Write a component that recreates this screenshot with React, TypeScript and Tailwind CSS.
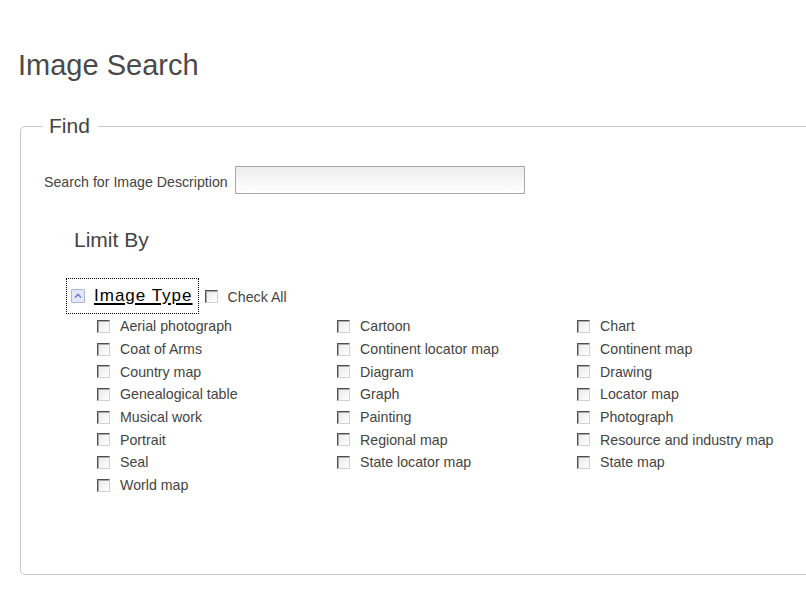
import React from "react";

const imageTypes = [
	"Aerial photograph",
	"Cartoon",
	"Chart",
	"Coat of Arms",
	"Continent locator map",
	"Continent map",
	"Country map",
	"Diagram",
	"Drawing",
	"Genealogical table",
	"Graph",
	"Locator map",
	"Musical work",
	"Painting",
	"Photograph",
	"Portrait",
	"Regional map",
	"Resource and industry map",
	"Seal",
	"State locator map",
	"State map",
	"World map",
];

function Check() {
	return (
		<input
			type="checkbox"
			className="appearance-none shrink-0 w-[13px] h-[13px] m-0 border border-t-[#4f4f4f] border-l-[#4f4f4f] border-r-[#d2d2d2] border-b-[#d2d2d2] bg-linear-to-br from-[#e8e8e8] to-white shadow-[inset_1px_1px_0_#a8a8a8]"
		/>
	);
}

function CollapseIcon() {
	return (
		<span className="shrink-0 flex items-center justify-center w-[14px] h-[14px] border border-[#aab5e2] bg-[#e3e8f8] rounded-[1px]">
			<svg width="10" height="10" viewBox="0 0 10 10">
				<path d="M2 6.5 L5 3.5 L8 6.5" fill="none" stroke="#7083c9" strokeWidth="1.6" />
			</svg>
		</span>
	);
}

export default function App() {
	return (
		<div className="w-[806px] h-[614px] overflow-hidden bg-white text-[#444] font-['Liberation_Sans',Arial,sans-serif]">
			<h1 className="mt-[49px] pl-[18px] text-[29px] leading-[33px] font-normal text-[#4a4a4a]">
				Image Search
			</h1>

			<fieldset className="ml-[20px] mt-[32px] w-[830px] border border-[#c9c9c9] rounded-[5px] pl-[23px] pt-[28px] pb-[77px]">
				<legend className="-ml-[1px] pl-[6px] pr-[8px] text-[21px] leading-[24px] text-[#444]">
					Find
				</legend>

				<div className="flex items-center h-[28px]">
					<label className="pt-[3px] text-[14.2px] leading-[20px]">
						Search for Image Description
					</label>
					<input
						type="text"
						className="ml-[7px] w-[290px] h-[28px] border border-[#a9a9a9] bg-linear-to-b from-[#ececec] to-white outline-none"
					/>
				</div>

				<h2 className="mt-[34px] ml-[30px] text-[21px] leading-[24px] font-normal text-[#444]">
					Limit By
				</h2>

				<div className="mt-[26px] ml-[22px] flex items-center">
					<a
						href="#"
						className="flex items-center border border-dotted border-black pl-[4px] pr-[5px] py-[7px]"
					>
						<CollapseIcon />
						<span className="ml-[9px] text-[17px] leading-[20px] tracking-[1px] text-black underline decoration-[1.5px] underline-offset-2">
							Image Type
						</span>
					</a>
					<div className="ml-[6px] mt-[1px] flex items-center">
						<Check />
						<span className="ml-[10px] text-[14.2px] leading-[20px]">Check All</span>
					</div>
				</div>

				<div className="mt-[1px] ml-[53px] grid grid-cols-[240px_240px_240px]">
					{imageTypes.map((t) => (
						<label key={t} className="flex items-center h-[22.7px]">
							<Check />
							<span className="ml-[10px] text-[14.2px] leading-[20px] whitespace-nowrap">{t}</span>
						</label>
					))}
				</div>
			</fieldset>
		</div>
	);
}
